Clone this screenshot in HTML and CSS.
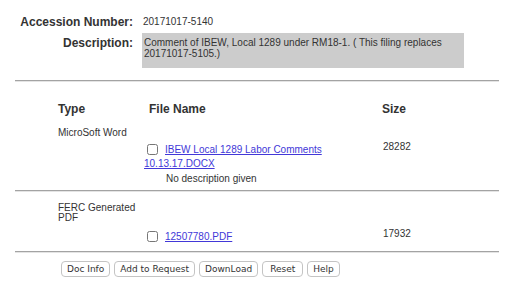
FILE: index.html
```html
<!DOCTYPE html>
<html lang="en">
<head>
    <meta charset="UTF-8">
    <title>Accession 20171017-5140</title>
    <link rel="stylesheet" href="styles.css">
</head>
<body>

<div class="info">
    <div class="info-label acc-label">Accession Number:</div>
    <div class="info-value acc-value">20171017-5140</div>
    <div class="info-label desc-label">Description:</div>
    <div class="desc-box">Comment of IBEW, Local 1289 under RM18-1. ( This filing replaces 20171017-5105.)</div>
</div>

<div class="rule"></div>

<div class="files">
    <div class="file-head">
        <div class="col-type">Type</div>
        <div class="col-name head-name">File Name</div>
        <div class="col-size">Size</div>
    </div>

    <div class="file-type">MicroSoft Word</div>
    <div class="file-row">
        <div class="col-type"></div>
        <div class="col-name"><input type="checkbox" class="pick"><a href="#">IBEW Local 1289 Labor Comments 10.13.17.DOCX</a></div>
        <div class="col-size size-val">28282</div>
    </div>
    <div class="file-note">No description given</div>
</div>

<div class="rule"></div>

<div class="files">
    <div class="file-type type-pdf">FERC Generated<br>PDF</div>
    <div class="file-row row-pdf">
        <div class="col-type"></div>
        <div class="col-name"><input type="checkbox" class="pick"><a href="#">12507780.PDF</a></div>
        <div class="col-size size-val">17932</div>
    </div>
</div>

<div class="rule"></div>

<div class="actions">
    <button>Doc Info</button>
    <button>Add to Request</button>
    <button>DownLoad</button>
    <button class="btn-reset">Reset</button>
    <button>Help</button>
</div>

</body>
</html>
```

FILE: styles.css
```css
body {
    font-family: "Liberation Sans", Arial, sans-serif;
    color: #333;
    background-color: #fff;
    margin: 0;
    padding: 0;
    width: 524px;
}

.info {
    display: grid;
    grid-template-columns: 133px 322px;
    column-gap: 9px;
    padding-top: 14px;
}

.info-label {
    font-size: 12px;
    font-weight: bold;
    text-align: right;
    line-height: 16px;
}

.info-value {
    font-size: 10px;
    line-height: 16px;
    padding-left: 1px;
}

.acc-label,
.acc-value {
    margin-bottom: 3px;
}

.desc-label {
    padding-top: 2px;
}

.desc-box {
    background-color: #ccc;
    font-size: 10px;
    line-height: 11px;
    padding: 4px 4px 9px 2px;
    height: 22px;
    box-sizing: content-box;
}

.rule {
    margin: 0 25px 0 15px;
    border-top: 1px solid #a3a3a3;
    border-bottom: 1px solid #e4e4e4;
}

.info + .rule {
    margin-top: 12px;
}

.files {
    font-size: 10px;
}

.file-head {
    display: flex;
    font-size: 12px;
    font-weight: bold;
    padding-top: 20px;
    line-height: 14px;
}

.col-type {
    width: 86px;
    margin-left: 58px;
}

.col-name {
    width: 232px;
    margin-left: 0;
}

.col-size {
    margin-left: 6px;
}

.head-name {
    padding-left: 5px;
    width: 227px;
}

.file-type {
    margin-left: 58px;
    margin-top: 12px;
    line-height: 10px;
}

.file-row {
    display: flex;
    margin-top: 5px;
    line-height: 14px;
}

.file-row .col-type {
    width: 86px;
}

.pick {
    width: 11px;
    height: 11px;
    margin: 0 7px 0 3px;
    vertical-align: -2px;
}

a {
    color: #4238d8;
}

.size-val {
    margin-top: -3px;
    margin-left: 7px;
}

.file-note {
    margin-left: 166px;
    line-height: 14px;
    margin-top: 1px;
    padding-bottom: 4px;
}

.type-pdf {
    margin-top: 11px;
}

.row-pdf {
    margin-top: 7px;
    padding-bottom: 7px;
}

.actions {
    display: flex;
    gap: 4px;
    margin-left: 61px;
    margin-top: 8px;
}

button {
    font-family: "DejaVu Sans", Verdana, sans-serif;
    font-size: 9px;
    color: #333;
    background-color: #fff;
    border: 1px solid #c4c4c4;
    border-radius: 4px;
    height: 16px;
    padding: 0 5px;
    line-height: 13px;
}

.btn-reset {
    padding: 0 7px;
}
```
